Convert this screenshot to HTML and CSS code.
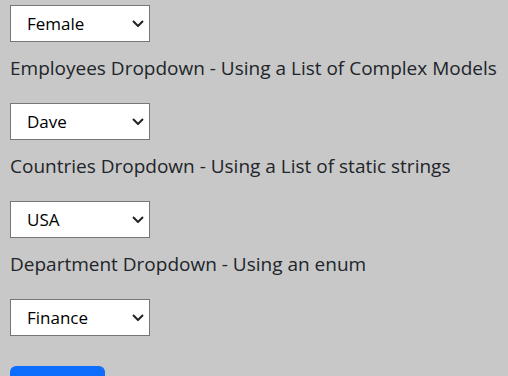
FILE: index.html
```html
<!DOCTYPE html>
<html lang="en">
<head>
    <meta charset="UTF-8">
    <meta name="viewport" content="width=device-width, initial-scale=1.0">
    <title>Dropdowns</title>
    <link rel="stylesheet" href="styles.css">
</head>
<body>
    <form class="dropdown-form">
        <select class="dropdown" id="gender">
            <option>Female</option>
            <option>Male</option>
        </select>

        <p class="dropdown-label">Employees Dropdown - Using a List of Complex Models</p>
        <select class="dropdown" id="employee">
            <option>Dave</option>
            <option>Sarah</option>
        </select>

        <p class="dropdown-label">Countries Dropdown - Using a List of static strings</p>
        <select class="dropdown" id="country">
            <option>USA</option>
            <option>UK</option>
        </select>

        <p class="dropdown-label">Department Dropdown - Using an enum</p>
        <select class="dropdown" id="department">
            <option>Finance</option>
            <option>HR</option>
        </select>

        <button type="submit" class="submit-button">Submit</button>
    </form>
</body>
</html>
```

FILE: styles.css
```css
body {
    margin: 0;
    padding: 5px 10px 0;
    background-color: #c8c8c8;
    font-family: "Open Sans", Arial, sans-serif;
    color: #212529;
}

/* Stack the fields */
.dropdown-form {
    display: flex;
    flex-direction: column;
    align-items: flex-start;
}

/* Style the selects */
.dropdown {
    appearance: none;
    width: 140px;
    height: 37px;
    margin: 0;
    padding: 0 28px 0 16px;
    border: 1px solid #767676;
    border-radius: 0;
    background-color: white;
    background-image: url("data:image/svg+xml,%3Csvg xmlns='http://www.w3.org/2000/svg' width='12' height='7' viewBox='0 0 12 7'%3E%3Cpath d='M1 1l5 5 5-5' fill='none' stroke='%23222' stroke-width='2'/%3E%3C/svg%3E");
    background-repeat: no-repeat;
    background-position: right 5px center;
    font-family: inherit;
    font-size: 17px;
    color: black;
}

/* Style the labels */
.dropdown-label {
    margin: 11px 0 20px;
    font-size: 19px;
    line-height: 30px;
}

/* Style the submit button */
.submit-button {
    margin-top: 30px;
    width: 95px;
    padding: 8px 0;
    border: none;
    border-radius: 6px;
    background-color: #0d6efd;
    color: white;
    font-family: inherit;
    font-size: 18px;
}
```
